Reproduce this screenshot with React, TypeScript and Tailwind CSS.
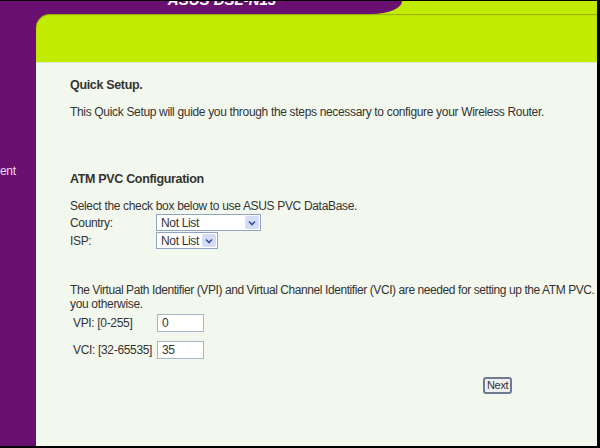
import React from "react";

function Select({ width, value }: { width: string; value: string }) {
  return (
    <div
      className={`flex h-[17px] ${width} items-stretch overflow-hidden border border-[#8fa3c4] bg-white`}
    >
      <div className="flex flex-1 items-center overflow-hidden whitespace-nowrap pl-[4px] text-[12px] leading-none text-[#333]">
        {value}
      </div>
      <div className="m-px flex w-[14px] shrink-0 items-center justify-center rounded-[2px] bg-[#d5ddf6]">
        <svg width="8" height="6" viewBox="0 0 8 6">
          <path d="M1 1.5 L4 4.5 L7 1.5" fill="none" stroke="#3a4f9a" strokeWidth="1.6" />
        </svg>
      </div>
    </div>
  );
}

function Input({ value }: { value: string }) {
  return (
    <div className="flex h-[18px] w-[47px] items-center border border-[#a8b4c8] bg-white pl-[4px] text-[12px] leading-none text-[#333]">
      {value}
    </div>
  );
}

export default function App() {
  return (
    <div
      className="flex h-[448px] w-[600px] bg-black pb-[2px] pr-[3px] pt-px tracking-[-0.33px]"
      style={{ fontFamily: '"Liberation Sans", Arial, sans-serif' }}
    >
      {/* Sidebar */}
      <div className="flex w-[36px] shrink-0 flex-col bg-[#6a1070] pt-[164px]">
        <div className="text-[12px] leading-none text-[#e6dcea]">ent</div>
      </div>

      {/* Main */}
      <div className="flex flex-1 flex-col bg-[#6a1070]">
        {/* Header */}
        <div className="relative h-[61px] shrink-0">
          <div className="absolute right-0 top-0 h-[20px] w-[230px] bg-[#c1eb00]" />
          <div className="absolute bottom-0 left-0 right-0 top-[13px] rounded-tl-[14px] bg-[#c1eb00] shadow-[inset_0_1px_1px_rgba(80,60,0,0.35)]" />
          <div className="absolute left-0 top-0 flex h-[13px] w-[366px] justify-center overflow-hidden rounded-br-[30px_13px] bg-[#6a1070]">
            <span className="-mt-[9px] ml-[6px] whitespace-nowrap text-[15px] font-bold italic leading-none tracking-[0px] text-white">
              ASUS DSL-N13
            </span>
          </div>
        </div>

        {/* Content */}
        <div className="flex flex-1 flex-col border-t border-[#dfe8c8] bg-[#f3f8ee] pl-[34px] text-[12px] leading-[14px] text-[#333]">
          <div className="mt-[15px] text-[12.5px] font-bold">Quick Setup.</div>
          <div className="mt-[13px] whitespace-nowrap">
            This Quick Setup will guide you through the steps necessary to configure your Wireless Router.
          </div>

          <div className="mt-[53px] text-[12.5px] font-bold">ATM PVC Configuration</div>
          <div className="mt-[13px] whitespace-nowrap">Select the check box below to use ASUS PVC DataBase.</div>
          <div className="mt-px flex items-center">
            <div className="w-[86px]">Country:</div>
            <Select width="w-[105px]" value="Not List" />
          </div>
          <div className="mt-px flex items-center">
            <div className="w-[86px]">ISP:</div>
            <Select width="w-[62px]" value="Not List" />
          </div>

          <div className="mt-[34px] whitespace-nowrap tracking-[-0.42px]">
            The Virtual Path Identifier (VPI) and Virtual Channel Identifier (VCI) are needed for setting up the ATM PVC.
          </div>
          <div>you otherwise.</div>
          <div className="mt-[3px] flex items-center pl-[3px]">
            <div className="w-[84px] whitespace-nowrap">VPI: [0-255]</div>
            <Input value="0" />
          </div>
          <div className="mt-[9px] flex items-center pl-[3px]">
            <div className="w-[84px] whitespace-nowrap">VCI: [32-65535]</div>
            <Input value="35" />
          </div>

          <div className="mt-[18px] flex pl-[413px]">
            <div className="flex h-[17px] items-center rounded-[3px] border-2 border-[#6f7c8e] bg-[#eef0f4] px-[2px] text-[11px] leading-none text-[#333]">
              Next
            </div>
          </div>
        </div>
      </div>
    </div>
  );
}
